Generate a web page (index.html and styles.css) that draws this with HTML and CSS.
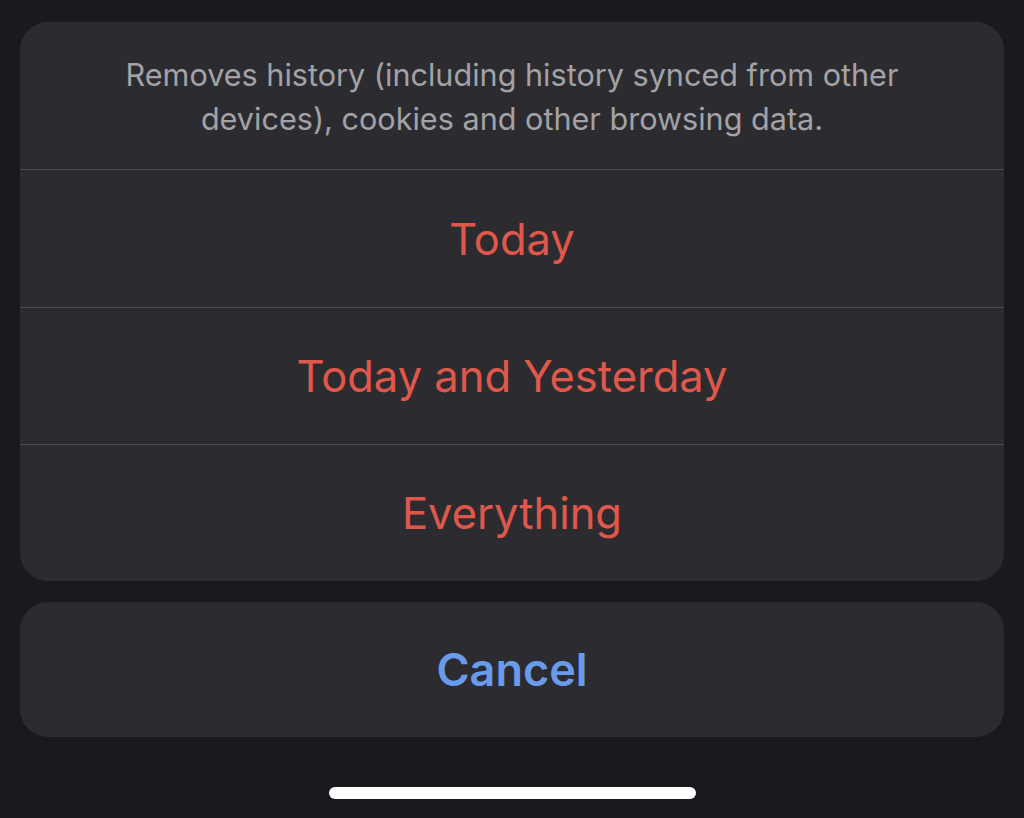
FILE: index.html
```html
<!DOCTYPE html>
<html lang="en">
<head>
    <meta charset="UTF-8">
    <meta name="viewport" content="width=device-width, initial-scale=1.0">
    <title>Clear History</title>
    <link rel="stylesheet" href="styles.css">
</head>
<body>
    <div class="sheet">
        <div class="group">
            <p class="message">Removes history (including history synced from other<br>devices), cookies and other browsing data.</p>
            <button class="action destructive">Today</button>
            <button class="action destructive">Today and Yesterday</button>
            <button class="action destructive">Everything</button>
        </div>
        <div class="group cancel-group">
            <button class="action cancel">Cancel</button>
        </div>
    </div>
    <div class="home-bar"><span></span></div>
</body>
</html>
```

FILE: styles.css
```css
html, body {
    margin: 0;
    padding: 0;
    height: 100%;
}
body {
    font-family: Inter, 'Noto Sans', sans-serif;
    background-color: #1a1a1e;
    display: flex;
    flex-direction: column;
}
.sheet {
    padding: 22px 20px 0;
    display: flex;
    flex-direction: column;
    gap: 21px;
}
.group {
    background-color: #2c2c30;
    border-radius: 28px;
    overflow: hidden;
    display: flex;
    flex-direction: column;
}
.message {
    margin: 0;
    height: 148px;
    box-sizing: border-box;
    padding-top: 31px;
    text-align: center;
    font-size: 30.6px;
    line-height: 44px;
    color: #a2a2a7;
    border-bottom: 1px solid #4a4a4f;
}
.action {
    background: none;
    border: none;
    font-family: inherit;
    height: 137px;
    padding: 0;
    font-size: 43.5px;
    cursor: pointer;
}
.action + .action {
    border-top: 1px solid #4a4a4f;
}
.destructive {
    color: #e0574b;
}
.cancel {
    height: 135px;
    font-size: 45px;
    color: #6a9aea;
    font-weight: 600;
}
.home-bar {
    flex: 1;
    display: flex;
    justify-content: center;
    align-items: flex-end;
    padding-bottom: 19px;
}
.home-bar span {
    width: 367px;
    height: 12px;
    border-radius: 6px;
    background-color: #fff;
}
```
